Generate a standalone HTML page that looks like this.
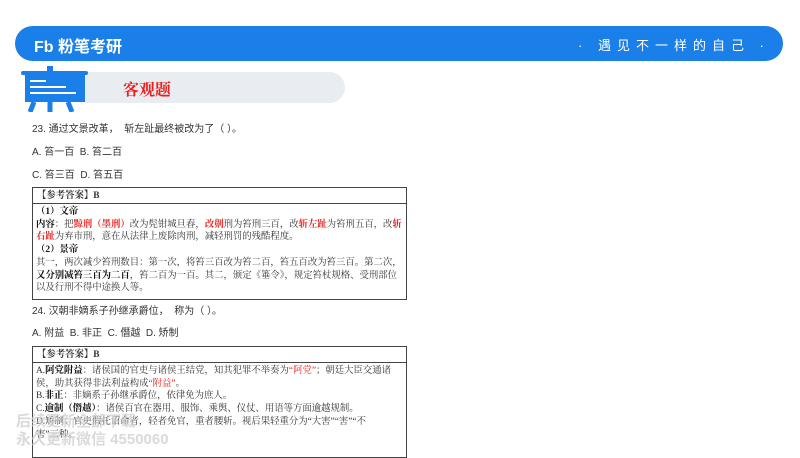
<!DOCTYPE html>
<html><head><meta charset="utf-8"><style>
body{margin:0;width:800px;height:450px;overflow:hidden;background:#fff;position:relative;font-family:"Liberation Sans","Noto Sans CJK SC",sans-serif}
.abs{position:absolute}
.hdr{left:15px;top:26px;width:768px;height:35px;background:#1a7fe8;border-radius:18px}
.q{font-size:10px;color:#333;left:32px;white-space:nowrap}
.box{left:32px;width:373px;border:1px solid #444;font-family:"Liberation Serif","Noto Serif CJK SC",serif;font-size:9.4px;color:#333;line-height:12.7px;white-space:nowrap;overflow:hidden}
.box .h{border-bottom:1px solid #444;padding:1px 4px;font-weight:bold;height:13px;line-height:14px}
.box .c{padding:2px 3px}
.r{color:#e8201e;font-weight:bold}
b{color:#111}
</style></head><body>
<div class="abs hdr"></div>
<div class="abs" style="left:34px;top:33px;color:#fff;font-weight:bold;font-size:16px">Fb 粉笔考研</div>
<div class="abs" style="left:578px;top:35px;color:#fff;font-size:13px;letter-spacing:6px">· 遇见不一样的自己 ·</div>
<div class="abs" style="left:85px;top:72px;width:260px;height:31px;background:#e9ecf0;border-radius:0 16px 16px 0"></div>
<svg class="abs" style="left:20px;top:66px" width="70" height="46" viewBox="0 0 70 46">
<rect x="27" y="0" width="6" height="6" fill="#1a7fe8"/>
<rect x="1" y="5" width="67" height="4" rx="2" fill="#1a7fe8"/>
<rect x="5" y="9" width="60" height="27" fill="#1a7fe8"/>
<rect x="10" y="14" width="16" height="2" fill="#fff"/><rect x="10" y="20" width="36" height="2" fill="#fff"/><rect x="10" y="26" width="46" height="2" fill="#fff"/>
<path d="M14 36 L10 46 M30 36 L30 46 M48 36 L52 46" stroke="#1a7fe8" stroke-width="5"/>
</svg>
<div class="abs" style="left:123px;top:77px;color:#e8201e;font-size:16px;font-weight:bold;font-family:'Liberation Serif','Noto Serif CJK SC',serif">客观题</div>
<div class="abs q" style="top:120px">23. 通过文景改革，&nbsp;&nbsp;斩左趾最终被改为了（ ）。</div>
<div class="abs q" style="top:143px">A. 笞一百&nbsp; B. 笞二百</div>
<div class="abs q" style="top:166px">C. 笞三百&nbsp; D. 笞五百</div>
<div class="abs box" style="top:187px;height:111px">
<div class="h">【参考答案】B</div>
<div class="c"><b>（1）文帝</b><br><b>内容</b>：把<span class="r">黥刑（墨刑）</span>改为髡钳城旦舂，<span class="r">改劓</span>刑为笞刑三百，改<span class="r">斩左趾</span>为笞刑五百，改<span class="r">斩</span><br><span class="r">右趾</span>为弃市刑，意在从法律上废除肉刑，减轻刑罚的残酷程度。<br><b>（2）景帝</b><br>其一，两次减少笞刑数目：第一次，将笞三百改为笞二百，笞五百改为笞三百。第二次，<br><b>又分别减笞三百为二百</b>，笞二百为一百。其二，颁定《箠令》，规定笞杖规格、受刑部位<br>以及行刑不得中途换人等。</div></div>
<div class="abs q" style="top:302px">24. 汉朝非嫡系子孙继承爵位，&nbsp;&nbsp;称为（ ）。</div>
<div class="abs q" style="top:324px">A. 附益&nbsp; B. 非正&nbsp; C. 僭越&nbsp; D. 矫制</div>
<div class="abs box" style="top:346px;height:110px">
<div class="h">【参考答案】B</div>
<div class="c">A.<b>阿党附益</b>：诸侯国的官吏与诸侯王结党，知其犯罪不举奏为<span class="r" style="font-weight:normal">“阿党”</span>；朝廷大臣交通诸<br>侯，助其获得非法利益构成<span class="r" style="font-weight:normal">“附益”</span>。<br>B.<b>非正</b>：非嫡系子孙继承爵位，依律免为庶人。<br>C.<b>逾制（僭越）</b>：诸侯百官在器用、服饰、乘舆、仪仗、用语等方面逾越规制。<br>D.矫制：官吏假托诏命者，轻者免官，重者腰斩。视后果轻重分为“大害”“害”“不<br>害”三种。</div></div>
<div class="abs" style="left:16px;top:413px;color:rgba(205,205,205,.75);font-size:15px;font-weight:bold;line-height:18px">后续更新全部下载<br>永久更新微信 4550060</div>
</body></html>
